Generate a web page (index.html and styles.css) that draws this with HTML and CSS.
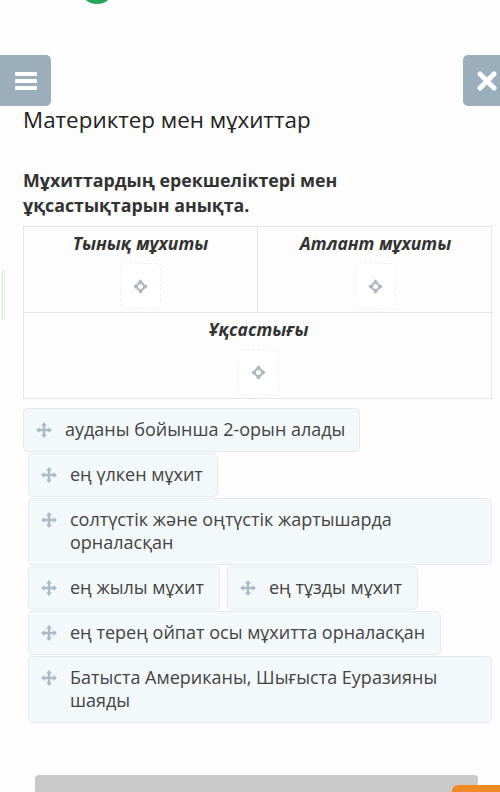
FILE: index.html
```html
<!DOCTYPE html>
<html lang="kk">
<head>
<meta charset="utf-8">
<link rel="stylesheet" href="styles.css">
</head>
<body>
<div class="page">
  <div class="dot"></div>
  <div class="toolbar">
    <button class="tbtn menu" aria-label="menu">
      <svg width="22" height="20" viewBox="0 0 22 20"><rect x="0" y="1" width="22" height="4" rx="1" fill="#fff"/><rect x="0" y="8" width="22" height="4" rx="1" fill="#fff"/><rect x="0" y="15" width="22" height="4" rx="1" fill="#fff"/></svg>
    </button>
    <button class="tbtn close" aria-label="close">
      <svg width="20" height="20" viewBox="0 0 20 20"><path d="M3 3 L17 17 M17 3 L3 17" stroke="#fff" stroke-width="5" stroke-linecap="round"/></svg>
    </button>
  </div>
  <h1 class="title">Материктер мен мұхиттар</h1>
  <p class="question">Мұхиттардың ерекшеліктері мен ұқсастықтарын анықта.</p>

  <div class="table">
    <div class="cell">
      <div class="head">Тынық мұхиты</div>
      <div class="drop"><svg width="15" height="15" viewBox="0 0 14 14"><path d="M7 0.3 L9.6 3 L4.4 3 Z M7 13.7 L9.6 11 L4.4 11 Z M0.3 7 L3 4.4 L3 9.6 Z M13.7 7 L11 4.4 L11 9.6 Z" fill="#aab6bd"/><circle cx="7" cy="7" r="3.3" fill="none" stroke="#aab6bd" stroke-width="1.9"/></svg></div>
    </div>
    <div class="cell">
      <div class="head">Атлант мұхиты</div>
      <div class="drop"><svg width="15" height="15" viewBox="0 0 14 14"><path d="M7 0.3 L9.6 3 L4.4 3 Z M7 13.7 L9.6 11 L4.4 11 Z M0.3 7 L3 4.4 L3 9.6 Z M13.7 7 L11 4.4 L11 9.6 Z" fill="#aab6bd"/><circle cx="7" cy="7" r="3.3" fill="none" stroke="#aab6bd" stroke-width="1.9"/></svg></div>
    </div>
    <div class="cell wide">
      <div class="head">Ұқсастығы</div>
      <div class="drop"><svg width="15" height="15" viewBox="0 0 14 14"><path d="M7 0.3 L9.6 3 L4.4 3 Z M7 13.7 L9.6 11 L4.4 11 Z M0.3 7 L3 4.4 L3 9.6 Z M13.7 7 L11 4.4 L11 9.6 Z" fill="#aab6bd"/><circle cx="7" cy="7" r="3.3" fill="none" stroke="#aab6bd" stroke-width="1.9"/></svg></div>
    </div>
  </div>

  <div class="items">
    <div class="item first" style="width:337px"><svg class="mv" viewBox="0 0 16 16"><path d="M8 0 L11 3.5 L5 3.5 Z M8 16 L11 12.5 L5 12.5 Z M0 8 L3.5 5 L3.5 11 Z M16 8 L12.5 5 L12.5 11 Z" fill="#a9bcc5"/><path d="M8 3 V13 M3 8 H13" stroke="#a9bcc5" stroke-width="2.4"/></svg><span>ауданы бойынша 2-орын алады</span></div>
    <div class="item" style="width:190px"><svg class="mv" viewBox="0 0 16 16"><path d="M8 0 L11 3.5 L5 3.5 Z M8 16 L11 12.5 L5 12.5 Z M0 8 L3.5 5 L3.5 11 Z M16 8 L12.5 5 L12.5 11 Z" fill="#a9bcc5"/><path d="M8 3 V13 M3 8 H13" stroke="#a9bcc5" stroke-width="2.4"/></svg><span>ең үлкен мұхит</span></div>
    <div class="item full"><svg class="mv" viewBox="0 0 16 16"><path d="M8 0 L11 3.5 L5 3.5 Z M8 16 L11 12.5 L5 12.5 Z M0 8 L3.5 5 L3.5 11 Z M16 8 L12.5 5 L12.5 11 Z" fill="#a9bcc5"/><path d="M8 3 V13 M3 8 H13" stroke="#a9bcc5" stroke-width="2.4"/></svg><span>солтүстік және оңтүстік жартышарда орналасқан</span></div>
    <div class="item" style="width:192px"><svg class="mv" viewBox="0 0 16 16"><path d="M8 0 L11 3.5 L5 3.5 Z M8 16 L11 12.5 L5 12.5 Z M0 8 L3.5 5 L3.5 11 Z M16 8 L12.5 5 L12.5 11 Z" fill="#a9bcc5"/><path d="M8 3 V13 M3 8 H13" stroke="#a9bcc5" stroke-width="2.4"/></svg><span>ең жылы мұхит</span></div>
    <div class="item" style="width:191px"><svg class="mv" viewBox="0 0 16 16"><path d="M8 0 L11 3.5 L5 3.5 Z M8 16 L11 12.5 L5 12.5 Z M0 8 L3.5 5 L3.5 11 Z M16 8 L12.5 5 L12.5 11 Z" fill="#a9bcc5"/><path d="M8 3 V13 M3 8 H13" stroke="#a9bcc5" stroke-width="2.4"/></svg><span>ең тұзды мұхит</span></div>
    <div class="item" style="width:413px"><svg class="mv" viewBox="0 0 16 16"><path d="M8 0 L11 3.5 L5 3.5 Z M8 16 L11 12.5 L5 12.5 Z M0 8 L3.5 5 L3.5 11 Z M16 8 L12.5 5 L12.5 11 Z" fill="#a9bcc5"/><path d="M8 3 V13 M3 8 H13" stroke="#a9bcc5" stroke-width="2.4"/></svg><span>ең терең ойпат осы мұхитта орналасқан</span></div>
    <div class="item full"><svg class="mv" viewBox="0 0 16 16"><path d="M8 0 L11 3.5 L5 3.5 Z M8 16 L11 12.5 L5 12.5 Z M0 8 L3.5 5 L3.5 11 Z M16 8 L12.5 5 L12.5 11 Z" fill="#a9bcc5"/><path d="M8 3 V13 M3 8 H13" stroke="#a9bcc5" stroke-width="2.4"/></svg><span>Батыста Американы, Шығыста Еуразияны шаяды</span></div>
  </div>

  <div class="bottom">
    <div class="bar"></div>
    <div class="orange"></div>
  </div>
  <div class="greenline"></div>
</div>
</body>
</html>
```
FILE: styles.css
```css
* { box-sizing: border-box; }
html, body { margin: 0; padding: 0; background: #fdfdfd; }
body { font-family: "Open Sans", "Noto Sans", sans-serif; color: #333; width: 500px; height: 792px; overflow: hidden; }
.page { position: relative; width: 500px; height: 792px; display: flow-root; }
.dot { width: 36px; height: 36px; border-radius: 50%; background: #27a65a; margin: -32px 0 0 79px; }
.toolbar { display: flex; justify-content: space-between; margin-top: 51px; height: 51px; }
.tbtn { border: 0; padding: 0; background: #9aafbb; height: 51px; display: flex; align-items: center; justify-content: center; }
.menu { width: 51px; border-radius: 0 5px 5px 0; }
.close { width: 37px; border-radius: 5px 0 0 5px; justify-content: flex-start; padding-left: 14px; }
.title { margin: 0 0 0 23px; font-size: 22.4px; font-weight: 400; line-height: 28px; color: #222; }
.question { margin: 34px 0 0 23px; width: 350px; font-size: 17.8px; font-weight: 700; line-height: 25px; color: #333; }
.table { margin: 8px 0 0 23px; width: 469px; display: grid; grid-template-columns: 234px 235px; border: 1px solid #e6e6e6; }
.cell { height: 86px; display: flex; flex-direction: column; align-items: center; border-right: 1px solid #e6e6e6; border-bottom: 1px solid #e6e6e6; }
.cell:nth-child(2) { border-right: 0; }
.cell.wide { grid-column: 1 / 3; border: 0; height: 85px; }
.head { font-style: italic; font-weight: 700; font-size: 17.5px; line-height: 22px; margin-top: 5px; color: #333; }
.drop { margin-top: 9px; width: 41px; height: 46px; border: 1px dashed #f0f0f0; border-radius: 4px; display: flex; align-items: center; justify-content: center; background: #fff; }
.items { margin: 9px 0 0 28px; width: 464px; display: flex; flex-wrap: wrap; gap: 1px 7px; }
.item { display: flex; align-items: flex-start; background: #f3f8fb; border: 1px solid #e2eaef; border-radius: 5px; padding: 9px 12px 10px 12px; font-size: 18px; line-height: 23px; color: #444; min-height: 44px; }
.item.first { margin-left: -5px; }
.item.full { width: 464px; }
.mv { flex: none; width: 16px; height: 16px; margin: 4px 13px 0 0; }
.bottom { position: absolute; left: 0; top: 775px; width: 500px; height: 17px; }
.bar { position: absolute; left: 35px; top: 0; width: 443px; height: 17px; background: #c9c9c9; border-radius: 4px 4px 0 0; }
.orange { position: absolute; left: 452px; top: 10px; width: 60px; height: 10px; background: #f08a24; border-radius: 6px 0 0 0; }
.greenline { position: absolute; left: 2px; top: 270px; width: 3px; height: 50px; border-left: 1px solid #cde8d2; border-right: 1px solid #e3f1e5; }
```
